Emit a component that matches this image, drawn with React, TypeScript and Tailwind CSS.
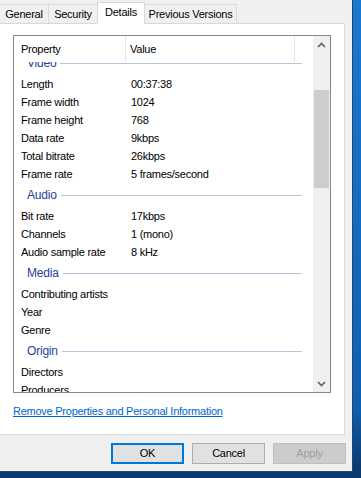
const font = { fontFamily: '"Liberation Sans", Arial, sans-serif' };

type Row = [string, string?];

const groups: { title: string; rows: Row[] }[] = [
  {
    title: "Video",
    rows: [
      ["Length", "00:37:38"],
      ["Frame width", "1024"],
      ["Frame height", "768"],
      ["Data rate", "9kbps"],
      ["Total bitrate", "26kbps"],
      ["Frame rate", "5 frames/second"],
    ],
  },
  {
    title: "Audio",
    rows: [
      ["Bit rate", "17kbps"],
      ["Channels", "1 (mono)"],
      ["Audio sample rate", "8 kHz"],
    ],
  },
  {
    title: "Media",
    rows: [["Contributing artists"], ["Year"], ["Genre"]],
  },
  {
    title: "Origin",
    rows: [["Directors"], ["Producers"]],
  },
];

function Chevron({ up }: { up?: boolean }) {
  return (
    <svg width="9" height="6" viewBox="0 0 9 6">
      <polyline
        points={up ? "1,5 4.5,1.5 8,5" : "1,1 4.5,4.5 8,1"}
        fill="none"
        stroke="#606060"
        strokeWidth="1.6"
      />
    </svg>
  );
}

function Tab({ label, w, selected }: { label: string; w: string; selected?: boolean }) {
  if (selected) {
    return (
      <div className={`${w} -ml-px h-[22px] -mb-px relative z-10 bg-white border-t border-l border-r border-[#d9d9d9] flex items-center justify-center pb-[3px]`}>
        {label}
      </div>
    );
  }
  return (
    <div className={`${w} h-[19px] bg-[#f0f0f0] border-t border-r border-[#d9d9d9] flex items-center justify-center`}>
      {label}
    </div>
  );
}

export default function App() {
  return (
    <div
      className="w-[361px] h-[478px] overflow-hidden text-[11px] tracking-[-0.25px] text-black bg-[linear-gradient(to_bottom,#1b78d0,#0f5fae_85%,#0a3a70_98%)]"
      style={font}
    >
      <div className="w-[353px] h-[472px] bg-[#f0f0f0] border-r border-b border-[#1d4778] flex flex-col">
        {/* tabs */}
        <div className="h-[23px] flex items-end">
          <Tab label="General" w="w-[49px]" />
          <Tab label="Security" w="w-[49px]" />
          <Tab label="Details" w="w-[48px]" selected />
          <Tab label="Previous Versions" w="w-[92px]" />
        </div>

        {/* tab page */}
        <div className="w-[345px] h-[412px] bg-white border-t border-r border-b border-[#d9d9d9] pt-[11px] pl-[13px]">
          <div className="w-[318px] h-[358px] border border-[#828790] flex">
            <div className="w-[299px] flex flex-col">
              <div className="h-[26px] flex items-center shrink-0 relative z-10 bg-white">
                <div className="w-[112px] pl-[7px] h-full flex items-center border-r border-[#e5e5e5]">Property</div>
                <div className="w-[169px] pl-[4px] h-full flex items-center border-r border-[#e5e5e5]">Value</div>
              </div>
              <div className="flex-1 overflow-hidden">
                <div className="-mt-[11px]">
                  {groups.map((g) => (
                    <div key={g.title}>
                      <div className="h-[24px] flex items-center pl-[13px] pr-[11px]">
                        <span className="text-[#1e3f9c] text-[12px] tracking-[-0.2px]">{g.title}</span>
                        <div className="flex-1 h-px bg-[#b8c2d8] ml-[4px]" />
                      </div>
                      {g.rows.map(([k, v]) => (
                        <div key={k} className="h-[18px] flex items-center">
                          <div className="w-[117px] pl-[7px]">{k}</div>
                          <div>{v}</div>
                        </div>
                      ))}
                    </div>
                  ))}
                </div>
              </div>
            </div>
            {/* scrollbar */}
            <div className="w-[17px] bg-[#f0f0f0] flex flex-col">
              <div className="h-[17px] flex items-center justify-center">
                <Chevron up />
              </div>
              <div className="flex-1">
                <div className="h-[37px]" />
                <div className="mx-[1px] h-[98px] bg-[#cdcdcd]" />
              </div>
              <div className="h-[17px] flex items-center justify-center">
                <Chevron />
              </div>
            </div>
          </div>
          <div className="mt-[11px] h-[15px] leading-[15px] text-[#0066cc] underline">
            Remove Properties and Personal Information
          </div>
        </div>

        {/* buttons */}
        <div className="mt-[8px] flex justify-end gap-[8px] pr-[6px]">
          <div className="w-[73px] h-[21px] border-2 border-[#0078d7] bg-[#e1e1e1] flex items-center justify-center">OK</div>
          <div className="w-[73px] h-[21px] border border-[#adadad] bg-[#e1e1e1] flex items-center justify-center">Cancel</div>
          <div className="w-[73px] h-[21px] border border-[#bfbfbf] bg-[#cccccc] text-[#a0a0a0] flex items-center justify-center">Apply</div>
        </div>
      </div>
    </div>
  );
}
